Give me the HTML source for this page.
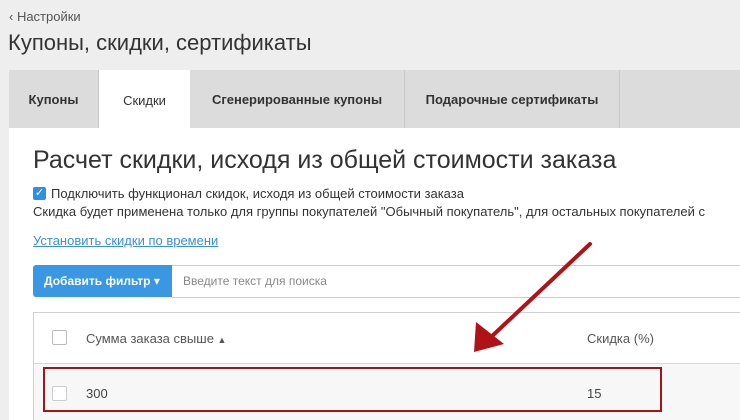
<!DOCTYPE html>
<html style="width:740px;height:420px;overflow:hidden"><head><meta charset="utf-8"><style>
body{margin:0;width:740px;height:420px;overflow:hidden;background:#eeeeee;font-family:"Liberation Sans","DejaVu Sans",sans-serif;position:relative;color:#333}
.a{position:absolute;white-space:nowrap}
.tab{position:absolute;top:70px;height:58px;background:#dcdcdc;border-right:1px solid #c9c9c9;box-sizing:border-box;font-size:13px;font-weight:bold;color:#333;display:flex;align-items:center;justify-content:center}
</style></head><body>
<div class="a" style="left:9px;top:9px;font-size:13px;color:#555">‹ Настройки</div>
<div class="a" style="left:8px;top:30px;font-size:22px;color:#333">Купоны, скидки, сертификаты</div>
<div class="tab" style="left:9px;width:90px">Купоны</div>
<div class="tab" style="left:99px;width:91px;background:#fff;border:none;font-weight:normal;top:70px;height:60px">Скидки</div>
<div class="tab" style="left:190px;width:215px">Сгенерированные купоны</div>
<div class="tab" style="left:405px;width:215px">Подарочные сертификаты</div>
<div class="tab" style="left:620px;width:120px;border:none"></div>
<div class="a" style="left:9px;top:128px;width:731px;height:292px;background:#fff"></div>
<div class="a" style="left:33px;top:146px;font-size:25px;color:#333">Расчет скидки, исходя из общей стоимости заказа</div>
<div class="a" style="left:33px;top:187px;width:13px;height:13px;background:#2f8fe0;border-radius:2px;color:#fff;font-size:11px;line-height:13px;text-align:center">✓</div>
<div class="a" style="left:51px;top:186px;font-size:13px;color:#333">Подключить функционал скидок, исходя из общей стоимости заказа</div>
<div class="a" style="left:33px;top:204px;font-size:13px;color:#333">Скидка будет применена только для группы покупателей "Обычный покупатель", для остальных покупателей с</div>
<div class="a" style="left:33px;top:233px;font-size:13px;color:#3a8fd8;text-decoration:underline">Установить скидки по времени</div>
<div class="a" style="left:33px;top:265px;width:139px;height:32px;background:#3a97e4;border-radius:3px 0 0 3px;color:#fff;font-size:12px;font-weight:bold;line-height:32px;text-indent:11px">Добавить фильтр ▾</div>
<div class="a" style="left:172px;top:265px;width:580px;height:31px;border:1px solid #ccc;border-left:none;font-size:12px;color:#888;line-height:31px;text-indent:11px">Введите текст для поиска</div>
<div class="a" style="left:33px;top:312px;width:720px;height:108px;border-left:1px solid #d0d0d0;border-top:1px solid #d0d0d0"></div>
<div class="a" style="left:34px;top:363px;width:720px;height:57px;background:#f7f7f7;border-top:1px solid #d6d6d6"></div>
<div class="a" style="left:52px;top:330px;width:13px;height:13px;border:1px solid #bbb;border-radius:2px;background:#fff"></div>
<div class="a" style="left:86px;top:331px;font-size:13px;color:#555">Сумма заказа свыше <span style="font-size:9px">▲</span></div>
<div class="a" style="left:587px;top:331px;font-size:13px;color:#555">Скидка (%)</div>
<div class="a" style="left:43px;top:367px;width:615px;height:41px;border:2px solid #a0151b"></div>
<div class="a" style="left:52px;top:386px;width:13px;height:13px;border:1px solid #ccc;border-radius:2px;background:#fff"></div>
<div class="a" style="left:86px;top:386px;font-size:13px;color:#444">300</div>
<div class="a" style="left:587px;top:386px;font-size:13px;color:#444">15</div>
<svg class="a" style="left:0;top:0" width="740" height="420"><line x1="590" y1="244" x2="490" y2="338" stroke="#b01218" stroke-width="4" stroke-linecap="round"/><polygon points="474,352 476,322 504,344" fill="#b01218"/></svg>
</body></html>
